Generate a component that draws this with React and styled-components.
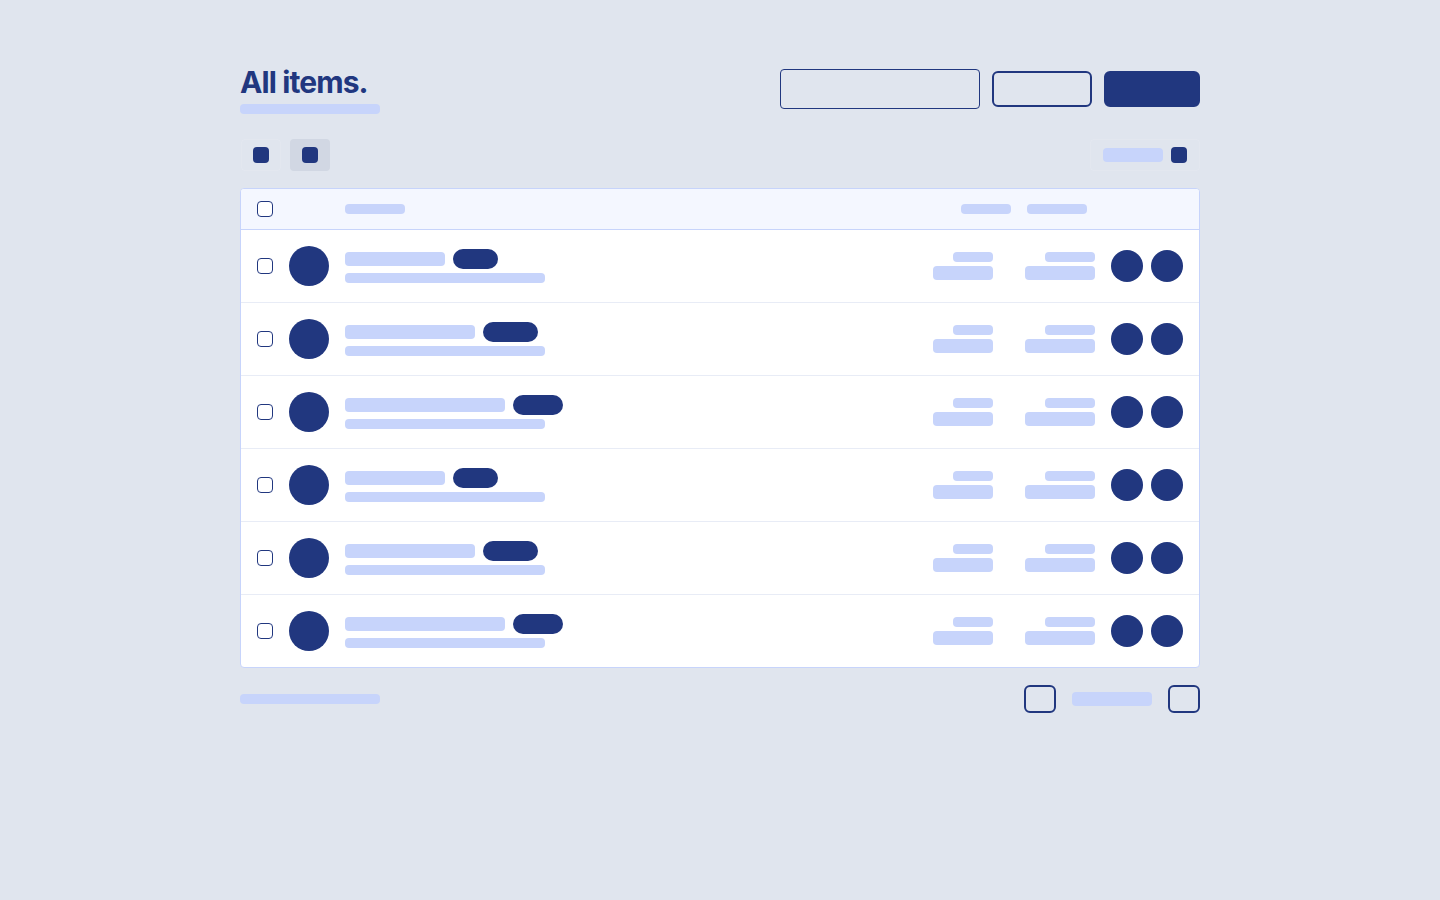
import styled, { createGlobalStyle } from 'styled-components'

const navy = '#21377f'
const bar = '#c7d4fb'

const GlobalStyle = createGlobalStyle`
    body {
        margin: 0;
        background: #e0e5ee;
        font-family: Inter, "Noto Sans", sans-serif;
    }
`

const Page = styled.div`
    width: 960px;
    margin: 0 auto;
    padding-top: 64px;
`

const Header = styled.div`
    display: flex;
    justify-content: space-between;
    align-items: center;
    margin-bottom: 25px;
`

const TitleBlock = styled.div`
    display: flex;
    flex-direction: column;
`

const Title = styled.h1`
    margin: 0;
    font-size: 30px;
    line-height: 36px;
    font-weight: 700;
    letter-spacing: -0.9px;
    color: ${navy};
`

const Bar = styled.div`
    width: ${p => p.w}px;
    height: ${p => p.h || 10}px;
    background: ${bar};
    border-radius: 4px;
    flex-shrink: 0;
`

const SubTitle = styled(Bar)`
    margin-top: 4px;
`

const Actions = styled.div`
    display: flex;
    align-items: center;
    gap: 12px;
`

const Search = styled.div`
    width: 200px;
    height: 40px;
    box-sizing: border-box;
    border: 1px solid ${navy};
    border-radius: 4px;
`

const Button = styled.div`
    width: ${p => p.w}px;
    height: 36px;
    box-sizing: border-box;
    border-radius: 6px;
    border: 2px solid ${navy};
    background: ${p => (p.filled ? navy : 'transparent')};
`

const Toolbar = styled.div`
    display: flex;
    justify-content: space-between;
    align-items: center;
    height: 32px;
    margin-bottom: 17px;
`

const ToggleGroup = styled.div`
    display: flex;
    gap: 9px;
    padding: 0 1px;
`

const Toggle = styled.div`
    width: 40px;
    height: 32px;
    box-sizing: border-box;
    display: flex;
    align-items: center;
    justify-content: center;
    border-radius: 4px;
    border: 1px solid ${p => (p.active ? 'transparent' : 'rgba(255,255,255,0.1)')};
    background: ${p => (p.active ? '#d1d7e3' : 'transparent')};
`

const Square = styled.div`
    width: 16px;
    height: 16px;
    border-radius: 4px;
    background: ${navy};
`

const SortBox = styled.div`
    display: flex;
    align-items: center;
    gap: 8px;
    height: 32px;
    box-sizing: border-box;
    padding: 0 12px;
    border: 1px solid rgba(255,255,255,0.1);
    border-radius: 4px;
`

const Table = styled.div`
    background: #fff;
    border: 1px solid ${bar};
    border-radius: 4px;
    overflow: hidden;
`

const TableHead = styled.div`
    display: flex;
    align-items: center;
    height: 40px;
    padding: 0 112px 0 16px;
    background: #f4f7ff;
    border-bottom: 1px solid ${bar};
`

const HeadLabel = styled(Bar)`
    margin-left: 72px;
    margin-right: auto;
`

const HeadCols = styled.div`
    display: flex;
    gap: 16px;
`

const Checkbox = styled.div`
    width: 16px;
    height: 16px;
    box-sizing: border-box;
    border: 1px solid ${navy};
    border-radius: 4px;
    background: #fff;
    flex-shrink: 0;
`

const Row = styled.div`
    display: grid;
    grid-template-columns: 16px 40px 1fr 60px 86px 72px;
    gap: 16px;
    align-items: center;
    height: 72px;
    padding: 0 16px;
    & + & {
        border-top: 1px solid #e8ecf6;
    }
`

const Avatar = styled.div`
    width: ${p => p.size}px;
    height: ${p => p.size}px;
    border-radius: 50%;
    background: ${navy};
`

const Info = styled.div`
    display: flex;
    flex-direction: column;
    gap: 4px;
`

const NameLine = styled.div`
    display: flex;
    align-items: center;
    gap: 8px;
`

const Badge = styled.div`
    width: ${p => p.w}px;
    height: 20px;
    border-radius: 10px;
    background: ${navy};
`

const Stat = styled.div`
    display: flex;
    flex-direction: column;
    align-items: flex-end;
    gap: 4px;
`

const RowActions = styled.div`
    display: flex;
    gap: 8px;
`

const Footer = styled.div`
    display: flex;
    justify-content: space-between;
    align-items: center;
    margin-top: 17px;
`

const Pager = styled.div`
    display: flex;
    align-items: center;
    gap: 16px;
`

const PageButton = styled.div`
    width: 32px;
    height: 28px;
    box-sizing: border-box;
    border: 2px solid ${navy};
    border-radius: 6px;
`

const rows = [
    { name: 100, badge: 45 },
    { name: 130, badge: 55 },
    { name: 160, badge: 50 },
    { name: 100, badge: 45 },
    { name: 130, badge: 55 },
    { name: 160, badge: 50 },
]

const App = () => {
    return (
        <Page>
            <GlobalStyle />
            <Header>
                <TitleBlock>
                    <Title>All items.</Title>
                    <SubTitle w={140} />
                </TitleBlock>
                <Actions>
                    <Search />
                    <Button w={100} />
                    <Button w={96} filled />
                </Actions>
            </Header>

            <Toolbar>
                <ToggleGroup>
                    <Toggle>
                        <Square />
                    </Toggle>
                    <Toggle active>
                        <Square />
                    </Toggle>
                </ToggleGroup>
                <SortBox>
                    <Bar w={60} h={14} />
                    <Square />
                </SortBox>
            </Toolbar>

            <Table>
                <TableHead>
                    <Checkbox />
                    <HeadLabel w={60} />
                    <HeadCols>
                        <Bar w={50} />
                        <Bar w={60} />
                    </HeadCols>
                </TableHead>
                {rows.map((r, i) => (
                    <Row key={i}>
                        <Checkbox />
                        <Avatar size={40} />
                        <Info>
                            <NameLine>
                                <Bar w={r.name} h={14} />
                                <Badge w={r.badge} />
                            </NameLine>
                            <Bar w={200} />
                        </Info>
                        <Stat>
                            <Bar w={40} />
                            <Bar w={60} h={14} />
                        </Stat>
                        <Stat>
                            <Bar w={50} />
                            <Bar w={70} h={14} />
                        </Stat>
                        <RowActions>
                            <Avatar size={32} />
                            <Avatar size={32} />
                        </RowActions>
                    </Row>
                ))}
            </Table>

            <Footer>
                <Bar w={140} />
                <Pager>
                    <PageButton />
                    <Bar w={80} h={14} />
                    <PageButton />
                </Pager>
            </Footer>
        </Page>
    )
}

export default App
